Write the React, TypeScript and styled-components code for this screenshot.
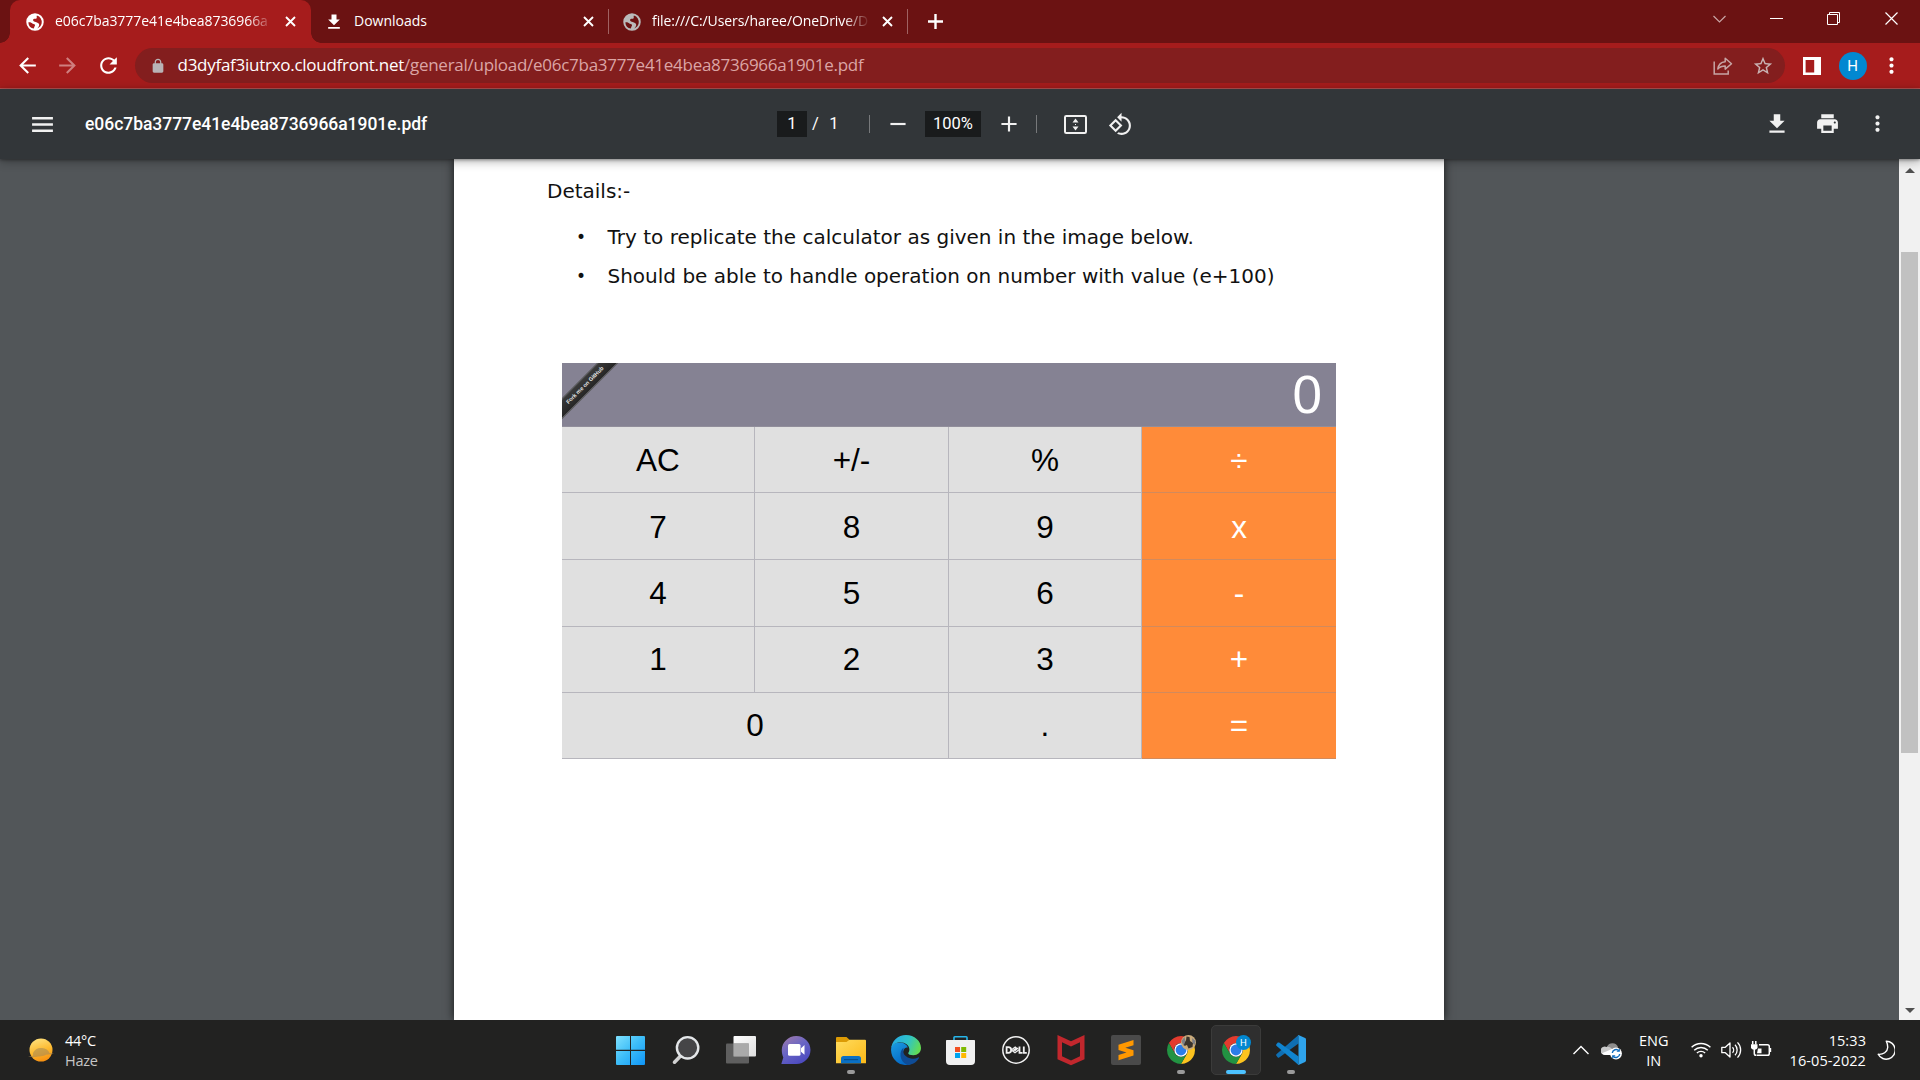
import React from 'react';
import styled, { createGlobalStyle } from 'styled-components';

const ui = `"Open Sans", "Noto Sans", sans-serif`;

const GlobalStyle = createGlobalStyle`
  * { box-sizing: border-box; }
  html, body { margin: 0; padding: 0; overflow: hidden; }
  svg { display: block; flex: none; }
`;

const Screen = styled.div`
  width: 1920px;
  height: 1080px;
  display: flex;
  flex-direction: column;
  overflow: hidden;
  background: #525659;
  font-family: ${ui};
`;

/* ---------- tab strip ---------- */

const TabStrip = styled.div`
  height: 43px;
  display: flex;
  background: #6b1212;
  padding-left: 10px;
`;

const Tab = styled.div<{ $width: number; $active?: boolean }>`
  position: relative;
  width: ${p => p.$width}px;
  height: 43px;
  display: flex;
  align-items: center;
  padding: ${p => (p.$active ? '0 15px' : '0 14px 0 13px')};
  background: ${p => (p.$active ? '#a61c1c' : 'transparent')};
  border-radius: 10px 10px 0 0;
  color: #fff;

  ${p => p.$active && `
    &::before, &::after {
      content: '';
      position: absolute;
      bottom: 0;
      width: 10px;
      height: 10px;
    }
    &::before { left: -10px; background: radial-gradient(circle at 0 0, transparent 9.5px, #a61c1c 10px); }
    &::after { right: -10px; background: radial-gradient(circle at 100% 0, transparent 9.5px, #a61c1c 10px); }
  `}
`;

const TabTitle = styled.span<{ $spacing?: number; $fade?: boolean }>`
  flex: 1;
  margin: 0 12px 2px 10px;
  white-space: nowrap;
  font-size: 14px;
  line-height: 24px;
  letter-spacing: ${p => p.$spacing ?? 0}px;
  ${p => p.$fade && 'mask-image: linear-gradient(90deg, #000 calc(100% - 26px), transparent);'}
`;

const TabDivider = styled.div`
  width: 1px;
  height: 25px;
  margin-top: 9px;
  background: #a06262;
`;

const NewTab = styled.div`
  display: flex;
  align-items: center;
  padding: 0 0 1px 20px;
`;

const WindowControls = styled.div`
  display: flex;
  margin-left: auto;
  padding-bottom: 6px;
`;

const WindowButton = styled.div<{ $width?: number }>`
  width: ${p => p.$width ?? 57}px;
  display: flex;
  align-items: center;
  justify-content: center;
`;

/* ---------- address row ---------- */

const AddressRow = styled.div`
  height: 46px;
  display: flex;
  align-items: center;
  background: #a61c1c;
  border-bottom: 1px solid #b95656;
  padding-left: 7px;
`;

const NavButton = styled.div`
  width: 40.5px;
  display: flex;
  justify-content: center;
`;

const Omnibox = styled.div`
  width: 1650px;
  height: 35px;
  display: flex;
  align-items: center;
  margin-left: 6px;
  padding: 0 11px 0 15px;
  border-radius: 18px;
  background: #831e1e;
`;

const Url = styled.div`
  flex: 1;
  margin: 0 0 1px 12px;
  white-space: nowrap;
  font-size: 17px;
  line-height: 28px;
  color: #dba5a5;
  letter-spacing: -0.27px;
`;

const Host = styled.span`
  color: #fff;
`;

const Avatar = styled.div`
  width: 28px;
  height: 28px;
  display: flex;
  align-items: center;
  justify-content: center;
  margin: 0 12.5px 0 18px;
  border-radius: 50%;
  background: #0288d1;
  color: #fff;
  font: 15px/28px Roboto, sans-serif;
`;

const BrowserActions = styled.div`
  display: flex;
  align-items: center;
  padding-left: 18px;
`;

/* ---------- PDF viewer ---------- */

const PdfToolbar = styled.div`
  position: relative;
  z-index: 2;
  height: 70px;
  display: flex;
  align-items: center;
  background: #323639;
  box-shadow: 0 2px 10px rgba(0, 0, 0, 0.32), 0 1px 3px rgba(0, 0, 0, 0.35);
  color: #f1f1f1;
  font-family: Roboto, sans-serif;
`;

const PdfStart = styled.div`
  width: 777px;
  display: flex;
  align-items: center;
  padding-left: 30px;
`;

const PdfTitle = styled.div`
  margin-left: 30px;
  font-size: 17.5px;
  font-weight: 500;
  line-height: 24px;
  letter-spacing: -0.04px;
  color: #fff;
`;

const PdfBox = styled.div<{ $width: number }>`
  width: ${p => p.$width}px;
  height: 26px;
  display: flex;
  align-items: center;
  justify-content: center;
  padding-bottom: 2px;
  background: #191b1c;
  color: #fff;
  font-size: 16.5px;
`;

const PageTotal = styled.div`
  width: 62px;
  display: flex;
  gap: 10.5px;
  padding: 0 0 1px 5px;
  color: #fff;
  font-size: 16.5px;
`;

const PdfDivider = styled.div`
  width: 1px;
  height: 18px;
  background: #77797b;
`;

const PdfSlot = styled.div<{ $width: number }>`
  width: ${p => p.$width}px;
  display: flex;
  justify-content: center;
`;

const PdfEnd = styled.div`
  display: flex;
  margin-left: auto;
  padding-right: 18px;
`;

const Viewer = styled.div`
  height: 861px;
  display: flex;
  justify-content: space-between;
  overflow: hidden;
  padding-left: 454px;
`;

const Sheet = styled.div`
  width: 990px;
  display: flex;
  flex-direction: column;
  padding: 20px 93px 0;
  background: #fff;
  box-shadow: 0 0 9px rgba(0, 0, 0, 0.75);
  color: #111;
  font-family: "DejaVu Sans", sans-serif;
  font-size: 20px;
`;

const Heading = styled.div`
  line-height: 24px;
`;

const Points = styled.ul`
  margin: 15px 0 0;
  padding: 0 0 0 29px;
  list-style: none;
`;

const Point = styled.li`
  display: flex;
  white-space: nowrap;
  line-height: 39px;

  &::before {
    content: '•';
    width: 31.5px;
    font-size: 17px;
  }
`;

const Scrollbar = styled.div`
  width: 21px;
  display: flex;
  flex-direction: column;
  align-items: center;
  background: #f1f1f1;
  padding: 9px 0 7px;
`;

const Thumb = styled.div`
  width: 17px;
  height: 501px;
  margin: 79px 0 auto;
  background: #c1c1c1;
`;

/* ---------- calculator ---------- */

const Calculator = styled.div`
  width: 774px;
  margin: 67px 0 0 15px;
  font-family: "Liberation Sans", Arial, sans-serif;
`;

const Display = styled.div`
  position: relative;
  height: 64px;
  display: flex;
  align-items: center;
  justify-content: flex-end;
  overflow: hidden;
  padding: 0 14px 1px 0;
  background: #858293;
  border-bottom: 1px solid #918e9b;
  color: #fff;
  font-size: 53px;
`;

const Ribbon = styled.div`
  position: absolute;
  left: -27px;
  top: 15px;
  width: 100px;
  height: 14.5px;
  transform: rotate(-45deg);
  background: linear-gradient(#3a3a3a, #262626);
  border: 0.5px solid #555;
  color: #e8e8e8;
  font-size: 5.6px;
  font-weight: bold;
  line-height: 13.5px;
  text-align: center;
`;

const Keys = styled.div`
  display: grid;
  grid-template-columns: 193px 194px 193px 194px;
  grid-template-rows: 66px 67px 67px 66px 66px;
`;

const Key = styled.div<{ $operator?: boolean; $span?: number; $top: number }>`
  grid-column: span ${p => p.$span ?? 1};
  display: flex;
  align-items: flex-start;
  justify-content: center;
  padding-top: ${p => p.$top}px;
  background: ${p => (p.$operator ? '#ff8b39' : '#e0e0e0')};
  border-bottom: 1px solid ${p => (p.$operator ? '#d28a5c' : '#b7b6bd')};
  border-right: ${p => (p.$operator ? '0' : '1px solid #b7b6bd')};
  color: ${p => (p.$operator ? '#fff' : '#000')};
  font-size: 31.5px;
  line-height: 36px;
`;

/* ---------- taskbar ---------- */

const Taskbar = styled.div`
  height: 60px;
  display: flex;
  background: #222221;
  color: #fff;
`;

const Weather = styled.div`
  width: 603px;
  display: flex;
  align-items: center;
  padding-left: 27px;
`;

const TwoLines = styled.div<{ $align?: string; $spacing?: number }>`
  display: flex;
  flex-direction: column;
  align-items: ${p => p.$align ?? 'flex-start'};
  padding-top: 1px;
  font-size: 14.5px;
  line-height: 20px;
  letter-spacing: ${p => p.$spacing ?? 0}px;
  white-space: nowrap;
`;

const WeatherText = styled(TwoLines)`
  margin-left: 10px;
  padding-top: 2px;
`;

const Muted = styled.span`
  color: #c6c6c6;
`;

const TaskSlot = styled.div`
  width: 55px;
  height: 60px;
  display: flex;
  justify-content: center;
  padding-top: 5px;
`;

const TaskButton = styled.div<{ $active?: boolean }>`
  width: 50px;
  height: 50px;
  display: flex;
  flex-direction: column;
  align-items: center;
  padding-top: ${p => (p.$active ? 8 : 9)}px;
  border: ${p => (p.$active ? '1px solid #3b3b3a' : '0')};
  border-radius: 5px;
  background: ${p => (p.$active ? '#2f2f2f' : 'transparent')};
`;

const Running = styled.div<{ $active?: boolean }>`
  width: ${p => (p.$active ? 20 : 8)}px;
  height: 4px;
  margin-top: 4px;
  border-radius: 2px;
  background: ${p => (p.$active ? '#4cc2ff' : '#9a9a9a')};
`;

const Tray = styled.div`
  display: flex;
  align-items: center;
  margin-left: auto;
  padding-right: 25px;
`;

const Gap = styled.div<{ $width: number }>`
  width: ${p => p.$width}px;
`;

/* ---------- icons ---------- */

type GlyphProps = { d: string; size: number; fill?: string };
const Glyph = ({ d, size, fill = '#fff' }: GlyphProps) => (
  <svg width={size} height={size} viewBox="0 0 24 24" fill={fill}>
    <path d={d} />
  </svg>
);

const paths = {
  globe: 'M12 2C6.48 2 2 6.48 2 12s4.48 10 10 10 10-4.48 10-10S17.52 2 12 2zm-1 17.93c-3.95-.49-7-3.85-7-7.93 0-.62.08-1.21.21-1.79L9 15v1c0 1.1.9 2 2 2v1.93zm6.9-2.54c-.26-.81-1-1.39-1.9-1.39h-1v-3c0-.55-.45-1-1-1H8v-2h2c.55 0 1-.45 1-1V7h2c1.1 0 2-.9 2-2v-.41c2.93 1.19 5 4.06 5 7.41 0 2.08-.8 3.97-2.1 5.39z',
  favicon: 'M12 1.500a10.500 10.500 0 1 0 0 21 10.500 10.500 0 0 0 0-21zM4 12.500c1.200-.2 2.300-.1 3.400.3 1.200.4 1.600 1.200 2.900 1.500 1.300.2 2 .9 1.600 2.100-.4 1-1.100 1.500-1.200 3.500A8.200 8.200 0 0 1 4 12.500zM14.300 4.200A8.200 8.200 0 0 1 20 13.500c-.6 2.900-2.600 5.200-5.300 6.200 1.400-1.800 2.600-3 2.300-4.800-.3-1.700-1.900-2-3.300-2.700-1.200-.6-2.700-.4-3.600-1.400-.8-1-.2-2.300 1-2.600 1.400-.3 2.600.2 3-1 .3-1-.5-1.700.2-3z',
  download: 'M19 9h-4V3H9v6H5l7 7 7-7zM5 18v2h14v-2H5z',
  back: 'M20 11H7.83l5.59-5.59L12 4l-8 8 8 8 1.41-1.41L7.83 13H20v-2z',
  forward: 'M12 4l-1.41 1.41L16.17 11H4v2h12.17l-5.58 5.59L12 20l8-8z',
  reload: 'M17.65 6.35C16.2 4.9 14.21 4 12 4c-4.42 0-7.99 3.58-7.99 8s3.57 8 7.99 8c3.73 0 6.84-2.55 7.73-6h-2.08c-.82 2.33-3.04 4-5.65 4-3.31 0-6-2.69-6-6s2.69-6 6-6c1.66 0 3.14.69 4.22 1.78L13 11h7V4l-2.35 2.35z',
  lock: 'M18 8h-1V6c0-2.76-2.24-5-5-5S7 3.24 7 6v2H6c-1.1 0-2 .9-2 2v10c0 1.1.9 2 2 2h12c1.1 0 2-.9 2-2V10c0-1.1-.9-2-2-2zM8.9 6c0-1.71 1.39-3.1 3.1-3.1s3.1 1.39 3.1 3.1v2H8.9V6z',
  star: 'M22 9.24l-7.19-.62L12 2 9.19 8.63 2 9.24l5.46 4.73L5.82 21 12 17.27 18.18 21l-1.63-7.03L22 9.24zM12 15.4l-3.76 2.27 1-4.28-3.32-2.88 4.38-.38L12 6.1l1.71 4.04 4.38.38-3.32 2.88 1 4.28L12 15.4z',
  more: 'M12 8c1.1 0 2-.9 2-2s-.9-2-2-2-2 .9-2 2 .9 2 2 2zm0 2c-1.1 0-2 .9-2 2s.9 2 2 2 2-.9 2-2-.9-2-2-2zm0 6c-1.1 0-2 .9-2 2s.9 2 2 2 2-.9 2-2-.9-2-2-2z',
  menu: 'M2 19.2h20v-2.3H2v2.3zm0-6h20v-2.4H2v2.4zM2 4.8v2.3h20V4.8H2z',
  print: 'M19 8H5c-1.66 0-3 1.34-3 3v6h4v4h12v-4h4v-6c0-1.66-1.34-3-3-3zm-3 11H8v-5h8v5zm3-7c-.55 0-1-.45-1-1s.45-1 1-1 1 .45 1 1-.45 1-1 1zm-1-9H6v4h12V3z',
  minus: 'M19 13H5v-2h14v2z',
  plus: 'M19 13h-6v6h-2v-6H5v-2h6V5h2v6h6v2z',
  rotate: 'M7.34 6.41L.86 12.9l6.49 6.48 6.49-6.48-6.5-6.49zM3.69 12.9l3.66-3.66L11 12.9l-3.66 3.66-3.65-3.66zm15.67-6.26C17.61 4.88 15.3 4 13 4V.76L8.76 5 13 9.24V6c1.79 0 3.58.68 4.95 2.05 2.73 2.73 2.73 7.17 0 9.9C16.58 19.32 14.79 20 13 20c-.97 0-1.94-.21-2.84-.61l-1.49 1.49C10.02 21.62 11.51 22 13 22c2.3 0 4.61-.88 6.36-2.64 3.52-3.51 3.52-9.21 0-12.72z',
};

const CloseIcon = () => (
  <svg width="11" height="11" viewBox="0 0 11 11" stroke="#fff" strokeWidth="1.9">
    <path d="M1 1l9 9M10 1l-9 9" />
  </svg>
);

const PlusIcon = () => (
  <svg width="15" height="15" viewBox="0 0 15 15" stroke="#fff" strokeWidth="2.4">
    <path d="M7.5 0v15M0 7.5h15" />
  </svg>
);

const ShareIcon = () => (
  <svg width="20" height="20" viewBox="0 0 20 20" fill="none" stroke="#c7a5a5" strokeWidth="1.5">
    <path d="M1.2 5.5v12.6h14v-3.5" />
    <path d="M4.8 13c.6-4.6 3.4-7 7.4-7.3V2.3l6.3 5.5-6.3 5.3V9.9c-3.2 0-5.5.8-7.4 3.1z" strokeLinejoin="round" />
  </svg>
);

const SidePanelIcon = () => (
  <svg width="18" height="18" viewBox="0 0 18 18">
    <path fill="#fff" fillRule="evenodd" d="M0 0h18v18H0zM2.6 3v12.4h8.6V3z" />
  </svg>
);

const FitPageIcon = () => (
  <svg width="23" height="19" viewBox="0 0 23 19" fill="#f1f1f1">
    <rect x="1" y="1" width="21" height="17" rx="1.3" fill="none" stroke="#f1f1f1" strokeWidth="2" />
    <path d="M11.5 3.4l3 4h-6zM11.5 15.6l3-4h-6z" />
    <path d="M11 9h1v1h-1z" />
  </svg>
);

const StartIcon = () => (
  <svg width="30" height="32" viewBox="0 0 30 32">
    <defs>
      <linearGradient id="win" x1="0" y1="0" x2="30" y2="30" gradientUnits="userSpaceOnUse">
        <stop offset="0" stopColor="#84e4ff" />
        <stop offset="0.5" stopColor="#3dbdf8" />
        <stop offset="1" stopColor="#0f95f7" />
      </linearGradient>
    </defs>
    <path fill="url(#win)" d="M1 2h13v13.7H0V3a1 1 0 0 1 1-1zM15 2h13a1 1 0 0 1 1 1v12.7H15zM0 17h14v14H1a1 1 0 0 1-1-1zM15 17h14v13a1 1 0 0 1-1 1H15z" />
  </svg>
);

const SearchIcon = () => (
  <svg width="30" height="32" viewBox="0 0 30 32" fill="none">
    <path d="M10 21.500L3.500 28.200" stroke="#d2d2d2" strokeWidth="3.600" strokeLinecap="round" />
    <circle cx="16.600" cy="13.800" r="10.700" fill="#454547" stroke="#e4e7e9" strokeWidth="2.400" />
  </svg>
);

const TaskViewIcon = () => (
  <svg width="30" height="32" viewBox="0 0 30 32">
    <defs>
      <linearGradient id="tv" x1="0" y1="0" x2="1" y2="1">
        <stop offset="0" stopColor="#fff" />
        <stop offset="1" stopColor="#dedede" />
      </linearGradient>
    </defs>
    <rect x="7.500" y="2" width="22.500" height="20.500" rx="1" fill="url(#tv)" />
    <rect x="0" y="9.500" width="23" height="20" rx="1" fill="#6a6a6a" fillOpacity="0.85" />
    <path d="M7.500 9.500H23v13H7.500z" fill="#aaa" />
  </svg>
);

const ChatIcon = () => (
  <svg width="30" height="32" viewBox="0 0 30 32">
    <defs>
      <linearGradient id="chat" x1="0" y1="0" x2="0.600" y2="1">
        <stop offset="0" stopColor="#a57ba8" />
        <stop offset="0.500" stopColor="#6a66c4" />
        <stop offset="1" stopColor="#4d4bc0" />
      </linearGradient>
    </defs>
    <path fill="url(#chat)" d="M15.300 2C23.400 2 29.500 8.400 29.500 16S23.300 30 15.300 30H1c-.6 0-.7-.6-.4-1l1.700-5.500C1.300 21.300.8 19 .8 16 .8 8.400 7.200 2 15.300 2z" />
    <rect x="7" y="10" width="12.500" height="11.700" rx="1.500" fill="#fff" />
    <path fill="#fff" d="M20 14.300l3.500-3.300v9.800L20 17.700z" />
  </svg>
);

const ExplorerIcon = () => (
  <svg width="30" height="32" viewBox="0 0 30 32">
    <defs>
      <linearGradient id="fold" x1="0" y1="0" x2="1" y2="1">
        <stop offset="0" stopColor="#ffdc5e" />
        <stop offset="1" stopColor="#fbb917" />
      </linearGradient>
    </defs>
    <path fill="#dc9b05" d="M1 3h9.500l3 2.800V13H0V4a1 1 0 0 1 1-1z" />
    <path fill="url(#fold)" d="M0 8h10.500l3-2.200H29a1 1 0 0 1 1 1V29.300H0z" />
    <path fill="#0a70c4" d="M7.500 22h15a2.500 2.500 0 0 1 2.500 2.500v4.800H5v-4.800A2.500 2.500 0 0 1 7.500 22z" />
    <path fill="#054f8f" d="M8 25h14v1.200H8z" />
  </svg>
);

const EdgeIcon = () => (
  <svg width="30" height="32" viewBox="0 0 30 32">
    <defs>
      <linearGradient id="e1" x1="0" y1="0.200" x2="1" y2="0.500">
        <stop offset="0" stopColor="#25a9e6" />
        <stop offset="0.550" stopColor="#2fc3c8" />
        <stop offset="1" stopColor="#62dc54" />
      </linearGradient>
      <linearGradient id="e2" x1="0" y1="0" x2="0.600" y2="1">
        <stop offset="0" stopColor="#1b9de2" />
        <stop offset="1" stopColor="#0467c4" />
      </linearGradient>
    </defs>
    <path fill="url(#e2)" d="M.1 15C.6 10.500 4.500 8.500 8.500 8.500c4 0 7.700 2 8.300 5.200-.9-.8-3.600-.3-4.600 3.600-1.200 5 1.900 10.700 7.600 13A15 15 0 0 1 .1 15z" />
    <path fill="#0f4c96" d="M12.500 13.700c-4.500 3-4.500 13.800 3.800 17.200 5.200.2 9.300-2.600 11.700-6.800.3-.7-.3-1-.8-.7-6.700 3.400-14.500-.6-14.900-5.600-.1-1.700.1-2.700.2-4.100z" />
    <path fill="url(#e1)" d="M.1 15.200C.5 7 7 1 15 1c8.500 0 15 6.100 15 13 0 4.300-3.400 7.200-7.600 7.200-3.200 0-5.200-1-5.200-2 0-.8 1.200-1.200 1.200-3.700C18.400 11.200 14 8.300 9.300 8.300 5 8.300 1 10.800.1 15.200z" />
  </svg>
);

const StoreIcon = () => (
  <svg width="30" height="32" viewBox="0 0 30 32">
    <g transform="translate(-0.5 0)">
      <path d="M8.500 8V3.500c0-.5.300-.8.800-.8h11.400c.5 0 .8.300.8.800V8" fill="none" stroke="#27b6ea" strokeWidth="1.600" />
      <path fill="#f1f1f1" d="M1.500 6h27c.6 0 1 .3 1 1v20a4 4 0 0 1-4 4h-21a4 4 0 0 1-4-4V7c0-.7.4-1 1-1z" />
      <path fill="#f25022" d="M9.500 13h5v5h-5z" />
      <path fill="#7fba00" d="M15.700 13h5v5h-5z" />
      <path fill="#00a4ef" d="M9.500 19h5v5h-5z" />
      <path fill="#ffb900" d="M15.700 19h5v5h-5z" />
    </g>
  </svg>
);

const DellIcon = () => (
  <svg width="30" height="32" viewBox="0 0 30 32">
    <circle cx="15" cy="16" r="13.200" fill="none" stroke="#f1f1f1" strokeWidth="1.500" />
    <g fill="none" stroke="#f1f1f1" strokeWidth="1.800">
      <path d="M5.600 13.200v5.700h1.600c2 0 3-1.200 3-2.900s-1-2.800-3-2.800z" />
      <path d="M10.300 16l3.900-3 1.200.9-3.600 2.800M11 16.500l3 2.300 4-3.100M13.500 17l3.800-3" strokeWidth="1.200" />
      <path d="M18.500 12.600v6.300h3M22.800 12.600v6.300h3" />
    </g>
  </svg>
);

const McAfeeIcon = () => (
  <svg width="30" height="32" viewBox="0 0 30 32">
    <path fill="#c1272d" fillRule="evenodd" d="M1.500 1L15 7.300 28.500 1v24.300L15 31.200 1.500 25.300zM6 8.200v14L15 26.500l9-4.300v-14l-9 4.300z" />
  </svg>
);

const SublimeIcon = () => (
  <svg width="30" height="32" viewBox="0 0 30 32">
    <rect y="1" width="30" height="30" rx="2" fill="#4a4a4a" />
    <path fill="#ff9800" d="M7.500 10.700L22.500 6v5.300l-8.200 2.500 8.200 2.500v5.200L7.500 26.200v-5.300l8-2.500-8-2.500z" />
  </svg>
);

const ChromeIcon = ({ badge }: { badge: 'photo' | 'letter' }) => (
  <svg width="30" height="32" viewBox="0 0 30 32">
    <g transform="translate(15 16)">
      <path fill="#e33b2e" d="M-12.120-7A14 14 0 0 1 12.120-7L0-7A7 7 0 0 0-6.060 3.500z" />
      <path fill="#fcc31e" d="M12.120-7A14 14 0 0 1 0 14L6.060 3.500A7 7 0 0 0 0-7z" />
      <path fill="#229342" d="M0 14A14 14 0 0 1-12.120-7L-6.060 3.500A7 7 0 0 0 6.060 3.500z" />
      <circle r="6.700" fill="#fff" />
      <circle r="5.400" fill="#2b7de9" />
    </g>
    {badge === 'letter' ? (
      <>
        <circle cx="22.500" cy="8.500" r="7.500" fill="#0288d1" />
        <text x="22.500" y="12" textAnchor="middle" fontFamily="Roboto, sans-serif" fontSize="9.500" fill="#fff">H</text>
      </>
    ) : (
      <>
        <circle cx="22.500" cy="8.500" r="7.500" fill="#c9ab7c" />
        <path fill="#3a332c" d="M20.500 2.500l3 .5.500 4 3 2-.5 4-4 1.500-1.500-3.500-2.500 1-1-3 2.500-2.500z" />
        <path fill="#7c7f86" d="M15.500 7l3-4 1 4-2 5zM26 4l3.500 3-1 4-2-2z" />
      </>
    )}
  </svg>
);

const VsCodeIcon = () => (
  <svg width="30" height="32" viewBox="0 0 30 32">
    <path fill="#0f6fb3" d="M.4 20.200L22.500.9v8.600L3.200 23.400c-.5.300-1 .3-1.400 0L.4 21.800c-.4-.5-.4-1.100 0-1.600z" />
    <path fill="#1084cf" d="M.4 11.800L22.500 31v-8.600L3.200 8.600c-.5-.3-1-.3-1.400 0L.4 10.200c-.4.500-.4 1.100 0 1.600z" />
    <path fill="#2fa4ec" d="M22 1.200c.3-.2.700-.2 1 0l6.100 2.900c.6.300.9.800.9 1.400v21c0 .6-.3 1.100-.9 1.400L23 30.800c-.5.200-1 .1-1.400-.2.500.3.900 0 .9-.6V2c0-.6-.4-.9-.5-.8z" />
  </svg>
);

const SunIcon = () => (
  <svg width="28" height="26" viewBox="0 0 28 26">
    <defs>
      <linearGradient id="sun" x1="0.300" y1="0" x2="0.600" y2="1">
        <stop offset="0" stopColor="#ffe07a" />
        <stop offset="0.550" stopColor="#fdb92e" />
        <stop offset="1" stopColor="#f78f10" />
      </linearGradient>
    </defs>
    <circle cx="14" cy="13" r="11.500" fill="url(#sun)" />
    <path fill="#a98a55" fillOpacity="0.6" d="M6 16c2-4 5-5.500 9-5 3.500.3 6.500 2 7.500 5H27c-2 1.500-5 1.500-8 1.700-2 1.600-8 1.600-10 2.300-3 .3-6 .2-8-.5l5-.8z" />
  </svg>
);

const ChevronUp = () => (
  <svg width="18" height="12" viewBox="0 0 18 12" fill="none" stroke="#fff" strokeWidth="1.400">
    <path d="M1.500 10L9 2.500l7.500 7.500" />
  </svg>
);

const CloudIcon = () => (
  <svg width="21" height="20" viewBox="0 0 21 20">
    <path fill="#8d8d8d" d="M6 6.500A6 6 0 0 1 17 7l-2 6H8z" />
    <path fill="#c9c9c9" d="M4 15a4.200 4.200 0 1 1 1.500-8c1.600-.6 4 0 5.500 2l5 5-8 1z" />
    <path fill="#fff" d="M1 13.300L11 9v6H4c-1.300 0-2.400-.7-3-1.700z" />
    <circle cx="15" cy="13.500" r="5.900" fill="#fff" />
    <g fill="none" stroke="#0f6cbd" strokeWidth="1.400">
      <path d="M11.300 13a3.800 3.800 0 0 1 6.600-2.200M18.700 14a3.800 3.800 0 0 1-6.600 2.200" />
      <path d="M18.300 8.800v2.500h-2.500M11.700 18.200v-2.500h2.500" strokeWidth="1.100" />
    </g>
  </svg>
);

const WifiIcon = () => (
  <svg width="20" height="16" viewBox="0 0 20 16" fill="none" stroke="#fff" strokeWidth="1.400">
    <path d="M.6 5.300a13.600 13.600 0 0 1 18.800 0M3.200 8.200a9.800 9.800 0 0 1 13.600 0M5.900 11a6 6 0 0 1 8.200 0" />
    <circle cx="10" cy="13.700" r="1.700" fill="#fff" stroke="none" />
  </svg>
);

const VolumeIcon = () => (
  <svg width="21" height="18" viewBox="0 0 21 18" fill="none" stroke="#fff" strokeWidth="1.300">
    <path d="M.8 6.300h3.500L9 2v14l-4.700-4.300H.8z" strokeLinejoin="round" />
    <path d="M11.500 6.200a4 4 0 0 1 0 5.600M14 3.800a7.400 7.400 0 0 1 0 10.400M16.500 1.400a10.800 10.800 0 0 1 0 15.200" />
  </svg>
);

const BatteryIcon = () => (
  <svg width="21" height="18" viewBox="0 0 21 18" fill="none" stroke="#fff" strokeWidth="1.500">
    <path d="M8 3.700h8.500a1.800 1.800 0 0 1 1.800 1.800v7a1.800 1.800 0 0 1-1.800 1.800H5.500" />
    <path d="M18.500 7h1.700v4h-1.700z" fill="#fff" stroke="none" />
    <path d="M7 7.500h3.500v4.700H6z" fill="#fff" stroke="none" />
    <path d="M0 3.300h6.500v3c0 1.600-1.300 2.500-3.200 2.500S0 7.900 0 6.300z" fill="#fff" stroke="none" />
    <path d="M1.700 0v3.500M4.800 0v3.500M3.300 8v4.500c0 1.200.6 1.800 1.700 1.800" />
  </svg>
);

const MoonIcon = () => (
  <svg width="18" height="20" viewBox="0 0 18 20" fill="none" stroke="#fff" strokeWidth="1.400">
    <path d="M9.300 1.200A9 9 0 1 1 1.200 14.300C6 14.800 10.500 12 10.700 7.500c.1-2.400-.4-4.300-1.400-6.300z" strokeLinejoin="round" />
  </svg>
);

const Triangle = ({ down }: { down?: boolean }) => (
  <svg width="10" height="5" viewBox="0 0 10 5" fill="#505050">
    <path d={down ? 'M0 0h10L5 5z' : 'M0 5h10L5 0z'} />
  </svg>
);

/* ---------- data ---------- */

type KeyDef = { label: string; operator?: boolean; span?: number };
type KeyRow = { top: number; keys: KeyDef[] };

const keyRows: KeyRow[] = [
  { top: 15, keys: [{ label: 'AC' }, { label: '+/-' }, { label: '%' }, { label: '÷', operator: true }] },
  { top: 16, keys: [{ label: '7' }, { label: '8' }, { label: '9' }, { label: 'x', operator: true }] },
  { top: 15, keys: [{ label: '4' }, { label: '5' }, { label: '6' }, { label: '-', operator: true }] },
  { top: 14, keys: [{ label: '1' }, { label: '2' }, { label: '3' }, { label: '+', operator: true }] },
  { top: 14, keys: [{ label: '0', span: 2 }, { label: '.' }, { label: '=', operator: true }] },
];

type TaskDef = { id: string; icon: React.ReactNode; running?: boolean; active?: boolean };

const tasks: TaskDef[] = [
  { id: 'start', icon: <StartIcon /> },
  { id: 'search', icon: <SearchIcon /> },
  { id: 'taskview', icon: <TaskViewIcon /> },
  { id: 'chat', icon: <ChatIcon /> },
  { id: 'explorer', icon: <ExplorerIcon />, running: true },
  { id: 'edge', icon: <EdgeIcon /> },
  { id: 'store', icon: <StoreIcon /> },
  { id: 'dell', icon: <DellIcon /> },
  { id: 'mcafee', icon: <McAfeeIcon /> },
  { id: 'sublime', icon: <SublimeIcon /> },
  { id: 'chrome', icon: <ChromeIcon badge="photo" />, running: true },
  { id: 'chrome-h', icon: <ChromeIcon badge="letter" />, running: true, active: true },
  { id: 'vscode', icon: <VsCodeIcon />, running: true },
];

export default function App() {
  return (
    <Screen>
      <GlobalStyle />
      <TabStrip>
        <Tab $width={301} $active>
          <Glyph d={paths.favicon} size={20} />
          <TabTitle $fade $spacing={-0.07}>e06c7ba3777e41e4bea8736966a</TabTitle>
          <CloseIcon />
        </Tab>
        <Tab $width={297}>
          <Glyph d={paths.download} size={20} />
          <TabTitle>Downloads</TabTitle>
          <CloseIcon />
        </Tab>
        <TabDivider />
        <Tab $width={298}>
          <Glyph d={paths.favicon} size={20} fill="#bababa" />
          <TabTitle $fade $spacing={-0.07}>file:///C:/Users/haree/OneDrive/D</TabTitle>
          <CloseIcon />
        </Tab>
        <TabDivider />
        <NewTab><PlusIcon /></NewTab>
        <WindowControls>
          <WindowButton>
            <svg width="13" height="8" viewBox="0 0 13 8" fill="none" stroke="#c9a5a5" strokeWidth="1.200"><path d="M.5 1l6 6 6-6" /></svg>
          </WindowButton>
          <WindowButton>
            <svg width="13" height="1" viewBox="0 0 13 1" fill="#fff"><path d="M0 0h13v1H0z" /></svg>
          </WindowButton>
          <WindowButton>
            <svg width="13" height="13" viewBox="0 0 13 13" fill="none" stroke="#fff"><path d="M.5 2.500h10v10H.5zM2.500 2.500v-2h10v10h-2" /></svg>
          </WindowButton>
          <WindowButton $width={58}>
            <svg width="13" height="13" viewBox="0 0 13 13" fill="none" stroke="#fff" strokeWidth="1.200"><path d="M.5.5l12 12M12.500.5l-12 12" /></svg>
          </WindowButton>
        </WindowControls>
      </TabStrip>

      <AddressRow>
        <NavButton><Glyph d={paths.back} size={25} /></NavButton>
        <NavButton><Glyph d={paths.forward} size={25} fill="#cf7f7f" /></NavButton>
        <NavButton><Glyph d={paths.reload} size={25} /></NavButton>
        <Omnibox>
          <Glyph d={paths.lock} size={16} fill="#b9b3b6" />
          <Url><Host>d3dyfaf3iutrxo.cloudfront.net</Host>/general/upload/e06c7ba3777e41e4bea8736966a1901e.pdf</Url>
          <ShareIcon />
          <Gap $width={19} />
          <Glyph d={paths.star} size={22} fill="#c9b3b3" />
        </Omnibox>
        <BrowserActions>
          <SidePanelIcon />
          <Avatar>H</Avatar>
          <Glyph d={paths.more} size={25} />
        </BrowserActions>
      </AddressRow>

      <PdfToolbar>
        <PdfStart>
          <Glyph d={paths.menu} size={25} fill="#f1f1f1" />
          <PdfTitle>e06c7ba3777e41e4bea8736966a1901e.pdf</PdfTitle>
        </PdfStart>
        <PdfBox $width={30}>1</PdfBox>
        <PageTotal><span>/</span><span>1</span></PageTotal>
        <PdfDivider />
        <PdfSlot $width={55}><Glyph d={paths.minus} size={26} fill="#f1f1f1" /></PdfSlot>
        <PdfBox $width={56}>100%</PdfBox>
        <PdfSlot $width={55}><Glyph d={paths.plus} size={26} fill="#f1f1f1" /></PdfSlot>
        <PdfDivider />
        <PdfSlot $width={76}><FitPageIcon /></PdfSlot>
        <PdfSlot $width={14}><Glyph d={paths.rotate} size={25} fill="#f1f1f1" /></PdfSlot>
        <PdfEnd>
          <PdfSlot $width={50}><Glyph d={paths.download} size={26} fill="#f1f1f1" /></PdfSlot>
          <PdfSlot $width={50}><Glyph d={paths.print} size={25} fill="#f1f1f1" /></PdfSlot>
          <PdfSlot $width={50}><Glyph d={paths.more} size={25} fill="#f1f1f1" /></PdfSlot>
        </PdfEnd>
      </PdfToolbar>

      <Viewer>
        <Sheet>
          <Heading>Details:-</Heading>
          <Points>
            <Point>Try to replicate the calculator as given in the image below.</Point>
            <Point>Should be able to handle operation on number with value (e+100)</Point>
          </Points>
          <Calculator>
            <Display>
              <Ribbon>Fork me on GitHub</Ribbon>
              0
            </Display>
            <Keys>
              {keyRows.map(row => row.keys.map(k => (
                <Key key={k.label} $operator={k.operator} $span={k.span} $top={row.top}>{k.label}</Key>
              )))}
            </Keys>
          </Calculator>
        </Sheet>
        <Scrollbar>
          <Triangle />
          <Thumb />
          <Triangle down />
        </Scrollbar>
      </Viewer>

      <Taskbar>
        <Weather>
          <SunIcon />
          <WeatherText $spacing={-0.3}>
            <span>44°C</span>
            <Muted>Haze</Muted>
          </WeatherText>
        </Weather>
        {tasks.map(t => (
          <TaskSlot key={t.id}>
            <TaskButton $active={t.active}>
              {t.icon}
              {t.running && <Running $active={t.active} />}
            </TaskButton>
          </TaskSlot>
        ))}
        <Tray>
          <ChevronUp />
          <Gap $width={11} />
          <CloudIcon />
          <Gap $width={17} />
          <TwoLines $align="center">
            <span>ENG</span>
            <span>IN</span>
          </TwoLines>
          <Gap $width={22} />
          <WifiIcon />
          <Gap $width={10} />
          <VolumeIcon />
          <Gap $width={9} />
          <BatteryIcon />
          <Gap $width={18} />
          <TwoLines $align="flex-end" $spacing={0.08}>
            <span>15:33</span>
            <span>16-05-2022</span>
          </TwoLines>
          <Gap $width={11} />
          <MoonIcon />
        </Tray>
      </Taskbar>
    </Screen>
  );
}
